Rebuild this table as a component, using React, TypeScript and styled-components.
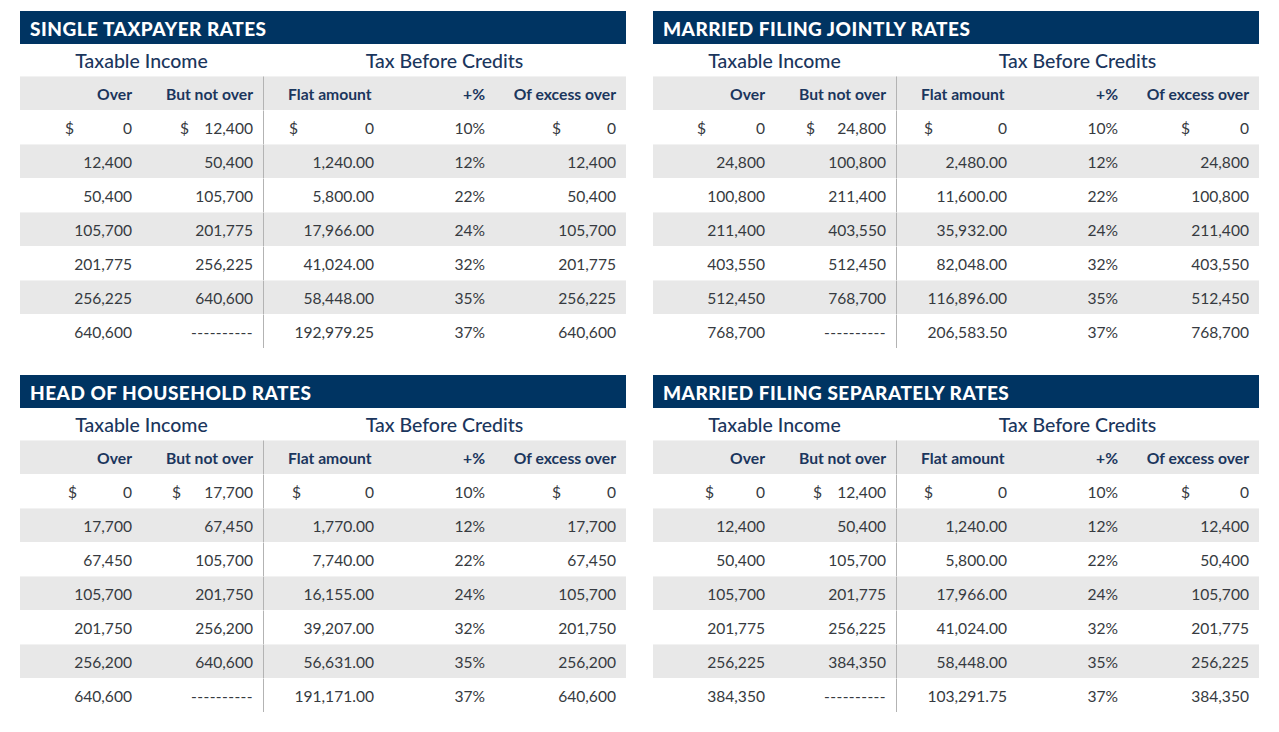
import React from "react";
import styled, { createGlobalStyle } from "styled-components";

const GlobalStyle = createGlobalStyle`
  html, body { margin: 0; padding: 0; background: #ffffff; }
  body { font-family: Lato, "Open Sans", Arial, sans-serif; }
`;

const Page = styled.div`
  display: grid;
  grid-template-columns: 606px 606px;
  column-gap: 27px;
  row-gap: 27px;
  padding: 11px 20px;
`;

const Panel = styled.section`
  display: flex;
  flex-direction: column;
`;

const TitleBar = styled.h2`
  margin: 0;
  height: 33px;
  background: #003462;
  color: #ffffff;
  font-family: Lato, Arial, sans-serif;
  font-weight: 900;
  font-size: 19px;
  letter-spacing: 0.5px;
  text-transform: uppercase;
  display: flex;
  align-items: center;
  padding-left: 10px;
  padding-top: 1px;
  box-sizing: border-box;
`;

const Table = styled.div`
  display: grid;
  grid-template-columns: 122px 121px 121px 111px 131px;
  grid-template-rows: 32px;
  grid-auto-rows: 34px;
`;

const GroupTitle = styled.div<{ $span: number }>`
  grid-column: span ${(p) => p.$span};
  display: flex;
  align-items: center;
  justify-content: center;
  color: #1b365d;
  font-size: 19.5px;
  font-weight: 500;
  padding-top: 1px;
`;

const Cell = styled.div<{ $shade: boolean; $divider: boolean; $head?: boolean }>`
  background: ${(p) => (p.$shade ? "#e8e8e8" : "#ffffff")};
  border-left: ${(p) => (p.$divider ? "1px solid #b3b3b3" : "none")};
  border-top: 1px solid ${(p) => (p.$shade ? "#f2f2f2" : "#ffffff")};
  box-sizing: border-box;
  display: flex;
  align-items: center;
  justify-content: flex-end;
  padding-right: 10px;
  color: ${(p) => (p.$head ? "#1b365d" : "#363a40")};
  font-weight: ${(p) => (p.$head ? 700 : 400)};
  font-size: ${(p) => (p.$head ? "15.7px" : "15.6px")};
  white-space: nowrap;
`;

const HeadLeft = styled.span`
  margin-right: auto;
  padding-left: 24px;
`;

const Dollar = styled.span<{ $offset: number }>`
  margin-right: auto;
  padding-left: ${(p) => p.$offset}px;
`;

const Dash = styled.span`
  letter-spacing: 0.4px;
`;

type Row = [string, string, string, string, string];

interface TableData {
  title: string;
  offsets: [number, number, number, number];
  rows: Row[];
}

const tables: TableData[] = [
  {
    title: "Single Taxpayer Rates",
    offsets: [45, 38, 25, 57],
    rows: [
      ["0", "12,400", "0", "10%", "0"],
      ["12,400", "50,400", "1,240.00", "12%", "12,400"],
      ["50,400", "105,700", "5,800.00", "22%", "50,400"],
      ["105,700", "201,775", "17,966.00", "24%", "105,700"],
      ["201,775", "256,225", "41,024.00", "32%", "201,775"],
      ["256,225", "640,600", "58,448.00", "35%", "256,225"],
      ["640,600", "----------", "192,979.25", "37%", "640,600"],
    ],
  },
  {
    title: "Married Filing Jointly Rates",
    offsets: [44, 31, 27, 53],
    rows: [
      ["0", "24,800", "0", "10%", "0"],
      ["24,800", "100,800", "2,480.00", "12%", "24,800"],
      ["100,800", "211,400", "11,600.00", "22%", "100,800"],
      ["211,400", "403,550", "35,932.00", "24%", "211,400"],
      ["403,550", "512,450", "82,048.00", "32%", "403,550"],
      ["512,450", "768,700", "116,896.00", "35%", "512,450"],
      ["768,700", "----------", "206,583.50", "37%", "768,700"],
    ],
  },
  {
    title: "Head of Household Rates",
    offsets: [48, 30, 28, 57],
    rows: [
      ["0", "17,700", "0", "10%", "0"],
      ["17,700", "67,450", "1,770.00", "12%", "17,700"],
      ["67,450", "105,700", "7,740.00", "22%", "67,450"],
      ["105,700", "201,750", "16,155.00", "24%", "105,700"],
      ["201,750", "256,200", "39,207.00", "32%", "201,750"],
      ["256,200", "640,600", "56,631.00", "35%", "256,200"],
      ["640,600", "----------", "191,171.00", "37%", "640,600"],
    ],
  },
  {
    title: "Married Filing Separately Rates",
    offsets: [52, 38, 27, 53],
    rows: [
      ["0", "12,400", "0", "10%", "0"],
      ["12,400", "50,400", "1,240.00", "12%", "12,400"],
      ["50,400", "105,700", "5,800.00", "22%", "50,400"],
      ["105,700", "201,775", "17,966.00", "24%", "105,700"],
      ["201,775", "256,225", "41,024.00", "32%", "201,775"],
      ["256,225", "384,350", "58,448.00", "35%", "256,225"],
      ["384,350", "----------", "103,291.75", "37%", "384,350"],
    ],
  },
];

const headers = ["Over", "But not over", "Flat amount", "+%", "Of excess over"];

function RateTable({ data }: { data: TableData }) {
  const dollarCols = [0, 1, 2, 4];
  return (
    <Panel>
      <TitleBar>{data.title}</TitleBar>
      <Table>
        <GroupTitle $span={2}>Taxable Income</GroupTitle>
        <GroupTitle $span={3}>Tax Before Credits</GroupTitle>
        {headers.map((h, i) => (
          <Cell key={h} $shade $divider={i === 2} $head>
            {i === 2 ? <HeadLeft>{h}</HeadLeft> : h}
          </Cell>
        ))}
        {data.rows.map((row, r) =>
          row.map((v, c) => {
            const di = dollarCols.indexOf(c);
            const showDollar = r === 0 && di >= 0;
            return (
              <Cell key={`${r}-${c}`} $shade={r % 2 === 1} $divider={c === 2}>
                {showDollar && <Dollar $offset={data.offsets[di]}>$</Dollar>}
                {v.startsWith("-") ? <Dash>{v}</Dash> : v}
              </Cell>
            );
          })
        )}
      </Table>
    </Panel>
  );
}

export default function App() {
  return (
    <>
      <GlobalStyle />
      <Page>
        {tables.map((t) => (
          <RateTable key={t.title} data={t} />
        ))}
      </Page>
    </>
  );
}
